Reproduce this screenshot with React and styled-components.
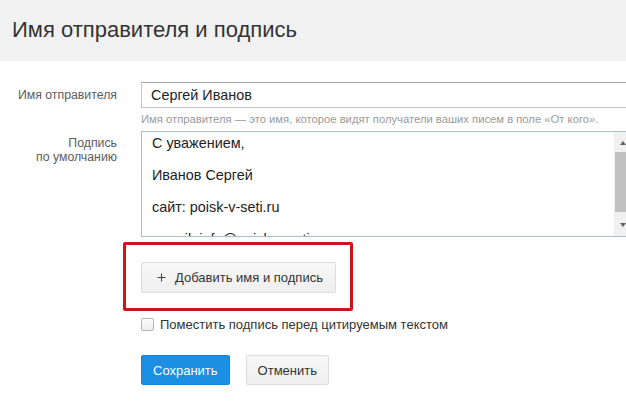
import React from 'react'
import styled, { createGlobalStyle } from 'styled-components'

const GlobalStyle = createGlobalStyle`
    html, body {
        margin: 0;
        padding: 0;
        background: #ffffff;
        overflow: hidden;
    }
    body {
        font-family: "Liberation Sans", Arial, sans-serif;
        color: #333333;
    }
`

const Header = styled.header`
    height: 61px;
    background: #f1f1f1;
    display: flex;
    align-items: center;
    padding-left: 12px;
`
const Title = styled.h1`
    margin: 0;
    font-size: 22px;
    font-weight: 400;
    color: #333333;
    padding-bottom: 2px;
`
const Form = styled.main`
    display: grid;
    grid-template-columns: 117px 491px;
    column-gap: 24px;
    padding-top: 21px;
`
const Label = styled.div`
    text-align: right;
    font-size: 12.3px;
    line-height: 14px;
    color: #5c5c5c;
    padding-top: ${(p) => p.$top || 0}px;
`
const Field = styled.div`
    display: flex;
    flex-direction: column;
    align-items: flex-start;
`
const Input = styled.div`
    box-sizing: border-box;
    width: 520px;
    height: 26px;
    border: 1px solid #c4c4c4;
    border-top-color: #a8a8a8;
    padding-left: 9px;
    display: flex;
    align-items: center;
    font-size: 14.4px;
    color: #222222;
`
const Hint = styled.div`
    font-size: 11.25px;
    color: #9a9a9a;
    margin-top: 5px;
    margin-bottom: 6px;
    white-space: nowrap;
`
const Editor = styled.div`
    box-sizing: border-box;
    width: 491px;
    height: 106px;
    border: 1px solid #a9bfcf;
    display: flex;
    overflow: hidden;
`
const EditorText = styled.div`
    flex: 1;
    padding: 2px 0 0 10px;
    font-size: 14.4px;
    color: #222222;
`
const Para = styled.p`
    margin: 0 0 14px;
    line-height: 18px;
    white-space: nowrap;
`
const ScrollBar = styled.div`
    width: 17px;
    background: #f0f0f0;
    display: flex;
    flex-direction: column;
    align-items: center;
    padding: 4px 0;
    box-sizing: border-box;
`
const Arrow = styled.div`
    width: 0;
    height: 0;
    border-left: 3px solid transparent;
    border-right: 3px solid transparent;
    ${(p) => (p.$down ? 'border-top: 4px solid #606060;' : 'border-bottom: 4px solid #606060;')}
    margin: 5px 0;
`
const Thumb = styled.div`
    width: 15px;
    height: 60px;
    background: #c1c1c1;
    margin-top: 2px;
    flex: 0 0 auto;
`
const Highlight = styled.div`
    margin: 5px 0 0 -18px;
    border: 3px solid #d0121b;
    border-radius: 2px;
    padding: 17px 14px 15px 15px;
`
const Button = styled.button`
    box-sizing: border-box;
    height: ${(p) => (p.$tall ? 30 : 31)}px;
    padding: 0 ${(p) => p.$right || 12}px 0 ${(p) => p.$left || 12}px;
    border: 1px solid ${(p) => (p.$primary ? '#1585d6' : '#dcdcdc')};
    border-radius: 2px;
    background: ${(p) => (p.$primary ? '#1a8fe3' : 'linear-gradient(#f7f7f7, #efefef)')};
    color: ${(p) => (p.$primary ? '#ffffff' : '#333333')};
    font-family: "Liberation Sans", Arial, sans-serif;
    font-size: 13px;
    display: flex;
    align-items: center;
    gap: 9px;
    cursor: pointer;
`
const CheckRow = styled.label`
    display: flex;
    align-items: center;
    gap: 6px;
    margin-top: 6px;
    font-size: 13px;
    color: #333333;
    white-space: nowrap;
`
const Box = styled.span`
    box-sizing: border-box;
    width: 13px;
    height: 13px;
    border: 1px solid #b5b5b5;
    border-radius: 2px;
    background: linear-gradient(#fdfdfd, #ececec);
`
const Actions = styled.div`
    display: flex;
    gap: 16px;
    margin-top: 23px;
`

function PlusIcon() {
    return (
        <svg width="9" height="9" viewBox="0 0 9 9">
            <path d="M4.5 0.5v8M0.5 4.5h8" stroke="#444" strokeWidth="1.1" />
        </svg>
    )
}

export default function App() {
    return (
        <>
            <GlobalStyle />
            <Header>
                <Title>Имя отправителя и подпись</Title>
            </Header>
            <Form>
                <Label $top={6}>Имя отправителя</Label>
                <Field>
                    <Input>Сергей Иванов</Input>
                    <Hint>
                        Имя отправителя — это имя, которое видят получатели ваших писем в поле «От кого».
                    </Hint>
                </Field>
                <Label $top={5}>
                    Подпись
                    <br />
                    по умолчанию
                </Label>
                <Field>
                    <Editor>
                        <EditorText>
                            <Para>С уважением,</Para>
                            <Para>Иванов Сергей</Para>
                            <Para>сайт: poisk-v-seti.ru</Para>
                            <Para>e-mail: info@poisk-v-seti.ru</Para>
                        </EditorText>
                        <ScrollBar>
                            <Arrow />
                            <Thumb />
                            <div style={{ flex: 1 }} />
                            <Arrow $down />
                        </ScrollBar>
                    </Editor>
                    <Highlight>
                        <Button $left={15} $right={12}>
                            <PlusIcon />
                            Добавить имя и подпись
                        </Button>
                    </Highlight>
                    <CheckRow>
                        <Box />
                        Поместить подпись перед цитируемым текстом
                    </CheckRow>
                    <Actions>
                        <Button $primary $tall $left={11} $right={11}>Сохранить</Button>
                        <Button $tall $left={11} $right={11}>Отменить</Button>
                    </Actions>
                </Field>
            </Form>
        </>
    )
}
